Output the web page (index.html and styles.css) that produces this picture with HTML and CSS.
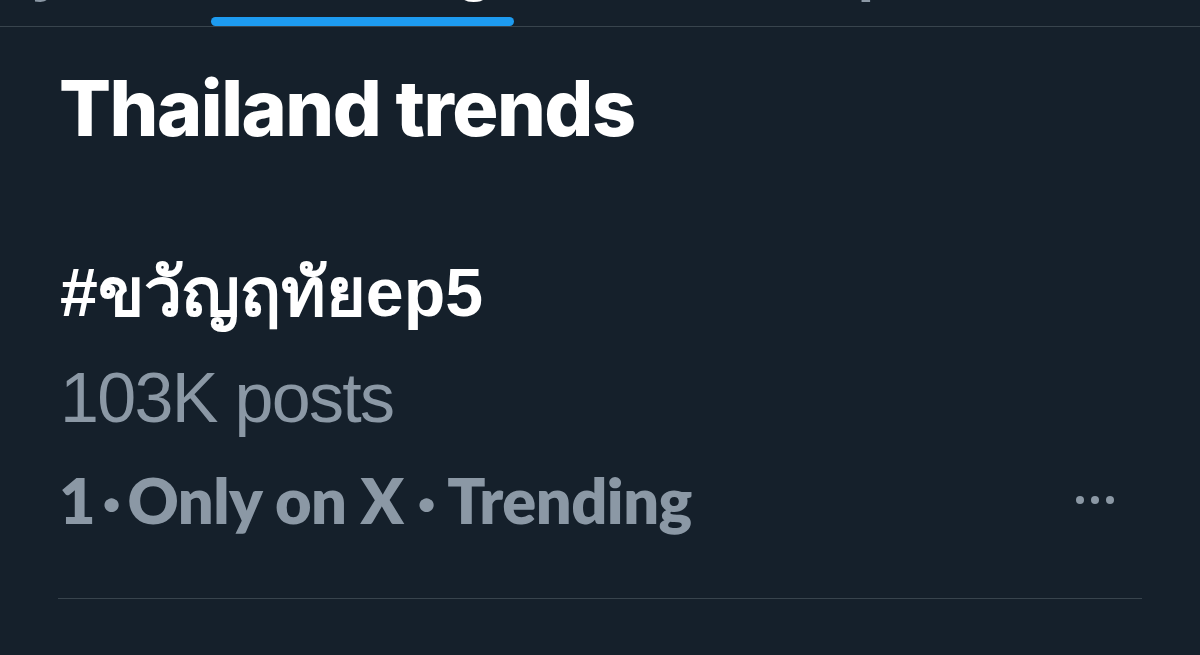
FILE: index.html
```html
<!DOCTYPE html>
<html lang="en">
<head>
<meta charset="utf-8">
<link rel="stylesheet" href="styles.css">
</head>
<body>
<div class="page">
  <nav class="tabs">
    <div class="tab tab-first"><span class="tab-label muted">For you</span></div>
    <div class="tab active"><span class="tab-label">Trending</span><span class="indicator"></span></div>
    <div class="tab"><span class="tab-label muted">News</span></div>
    <div class="tab"><span class="tab-label muted">Sports</span></div>
  </nav>
  <main class="content">
    <h1 class="title">Thailand trends</h1>
    <section class="trend">
      <div class="tag">#ขวัญฤทัยep5</div>
      <div class="count">103K posts</div>
      <div class="meta-row">
        <div class="meta">1&#8201;·&#8201;Only on X · Trending</div>
        <div class="more" aria-label="More">
          <span class="dot"></span><span class="dot"></span><span class="dot"></span>
        </div>
      </div>
    </section>
    <div class="divider"></div>
  </main>
</div>
</body>
</html>
```
FILE: styles.css
```css
html, body {
  margin: 0;
  padding: 0;
  background: #15202b;
}
body {
  width: 1200px;
  height: 655px;
  overflow: hidden;
  font-family: "Liberation Sans", "DejaVu Sans", sans-serif;
  color: #ffffff;
}
.page {
  display: flex;
  flex-direction: column;
}
.tabs {
  display: grid;
  grid-template-columns: 211px 303px 272px 256px 1fr;
  height: 26px;
  border-bottom: 1px solid #38444d;
  overflow: hidden;
}
.tab {
  position: relative;
  display: flex;
  justify-content: center;
  white-space: nowrap;
}
.tab-first {
  justify-content: flex-end;
  padding-right: 69px;
}
.tab-label {
  font-size: 62px;
  font-weight: 700;
  line-height: 62px;
  margin-top: -63px;
  color: #ffffff;
}
.tab-label.muted { color: #8b98a5; }
.indicator {
  position: absolute;
  left: 0;
  right: 0;
  bottom: 0;
  height: 9px;
  border-radius: 5px;
  background: #1d9bf0;
}
.content {
  padding: 0 58px;
  display: flex;
  flex-direction: column;
}
.title {
  margin: 0;
  padding: 31px 0 0 1px;
  font-family: "Inter", "Liberation Sans", sans-serif;
  font-weight: 800;
  font-size: 77px;
  line-height: 100px;
  letter-spacing: -1.5px;
}
.trend {
  display: flex;
  flex-direction: column;
  padding-top: 94px;
}
.tag {
  padding-left: 2px;
  font-size: 68px;
  font-weight: 700;
  line-height: 80px;
}
.count {
  margin-top: 16px;
  padding-left: 2px;
  font-size: 70px;
  font-weight: 400;
  color: #8b98a5;
  line-height: 100px;
  letter-spacing: -1.7px;
}
.meta-row {
  display: flex;
  justify-content: space-between;
  align-items: center;
  margin-top: 2px;
}
.meta {
  padding-left: 1px;
  font-family: "Lato", "Liberation Sans", sans-serif;
  font-size: 63px;
  font-weight: 800;
  color: #8b98a5;
  line-height: 100px;
  letter-spacing: -0.5px;
}
.more {
  display: flex;
  gap: 6.5px;
  margin-right: 28px;
}
.dot {
  width: 8.5px;
  height: 8.5px;
  border-radius: 50%;
  background: #8b98a5;
}
.divider {
  margin-top: 48px;
  height: 1px;
  background: #38444d;
}
```
